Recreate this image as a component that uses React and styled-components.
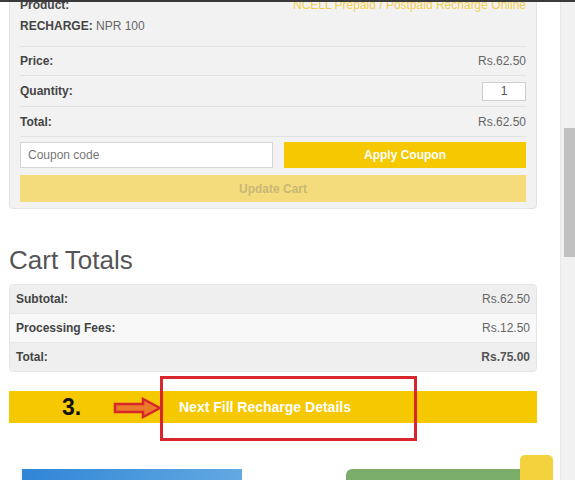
import React from 'react'
import styled, { createGlobalStyle } from 'styled-components'

const Global = createGlobalStyle`
  html, body { margin: 0; padding: 0; background: #fff; overflow: hidden; }
  body { font-family: "Liberation Sans", Arial, sans-serif; }
`

const Frame = styled.div`
  width: 575px;
  height: 480px;
  display: flex;
  overflow: hidden;
  position: relative;
  border-top: 2px solid #3a3a3a;
  box-sizing: border-box;
`

const Content = styled.div`
  width: 560px;
  height: 100%;
  padding: 0 23px 0 9px;
  box-sizing: border-box;
  overflow: hidden;
`

const Scrollbar = styled.div`
  width: 15px;
  height: 100%;
  background: #f1f1f1;
  border-left: 1px solid #e8e8e8;
  box-sizing: border-box;
  display: flex;
  flex-direction: column;
  align-items: flex-end;
`

const Thumb = styled.div`
  width: 11px;
  height: 129px;
  margin-top: 126px;
  background: #c1c1c1;
`

const Card = styled.div`
  margin-top: -15px;
  background: #f2f2f2;
  border: 1px solid #e3e3e3;
  border-radius: 4px;
  padding: 0 10px 6px;
`

const Row = styled.div`
  display: flex;
  justify-content: space-between;
  align-items: center;
  height: ${p => p.$h || 29}px;
  border-bottom: 1px solid #e2e2e2;
  font-size: 12px;
  color: #666;
`

const ProductRow = styled.div`
  padding: 7px 0 9px;
  border-bottom: 1px solid #e2e2e2;
  font-size: 12px;
  line-height: 21px;
  color: #666;
`

const Line = styled.div`
  display: flex;
  justify-content: space-between;
`

const Label = styled.span`
  font-weight: bold;
  color: #444;
`

const ProductLink = styled.span`
  color: #f3cf4e;
`

const QtyInput = styled.div`
  width: 44px;
  height: 19px;
  border: 1px solid #cfcfcf;
  background: #fff;
  box-sizing: border-box;
  display: flex;
  align-items: center;
  justify-content: center;
  font-size: 12px;
  color: #555;
`

const CouponRow = styled.div`
  display: flex;
  gap: 11px;
  margin-top: 5px;
`

const CouponInput = styled.div`
  flex: 0 0 253px;
  height: 26px;
  border: 1px solid #d6d6d6;
  background: #fff;
  box-sizing: border-box;
  padding-left: 7px;
  display: flex;
  align-items: center;
  font-size: 12px;
  color: #777;
`

const Button = styled.div`
  flex: 1;
  height: ${p => p.$h || 26}px;
  background: ${p => (p.$pale ? '#f4dc7c' : '#f5c800')};
  color: ${p => (p.$pale ? '#c9b874' : '#fff')};
  font-size: 12px;
  font-weight: bold;
  display: flex;
  align-items: center;
  justify-content: center;
  margin-top: ${p => p.$mt || 0}px;
`

const Heading = styled.h2`
  margin: 35px 0 0;
  font-size: 26px;
  font-weight: normal;
  color: #555;
  line-height: 32px;
`

const Totals = styled.div`
  margin-top: 8px;
  border: 1px solid #e6e6e6;
  border-radius: 4px;
  overflow: hidden;
`

const TotalRow = styled.div`
  display: flex;
  justify-content: space-between;
  align-items: center;
  height: 28px;
  padding: 0 6px;
  font-size: 12px;
  color: #666;
  background: ${p => (p.$alt ? '#f8f8f8' : '#efefef')};
  font-weight: ${p => (p.$bold ? 'bold' : 'normal')};
  & + & { border-top: 1px solid #e9e9e9; }
`

const Amount = styled.span`
  color: ${p => (p.$strong ? '#555' : '#666')};
`

const NextWrap = styled.div`
  position: relative;
  margin-top: 19px;
`

const NextBar = styled.div`
  height: 32px;
  background: #f5c800;
  display: flex;
  align-items: center;
`

const Step = styled.span`
  width: 105px;
  padding-left: 53px;
  box-sizing: border-box;
  font-size: 23px;
  font-weight: bold;
  color: #111;
`

const NextText = styled.span`
  margin-left: 65px;
  font-size: 14px;
  font-weight: bold;
  color: #fff;
`

const Highlight = styled.div`
  position: absolute;
  left: 151px;
  top: -15px;
  width: 257px;
  height: 65px;
  border: 3px solid #d7262c;
  box-sizing: border-box;
`

const Arrow = styled.svg`
  position: absolute;
  left: 104px;
  top: 6px;
`

const Promos = styled.div`
  display: flex;
  justify-content: space-between;
  margin-top: 46px;
  padding: 0 0 0 11px;
  margin-right: -16px;
`

const BluePromo = styled.div`
  width: 220px;
  height: 40px;
  background: linear-gradient(90deg, #2f86d6, #63a9e2);
  border-left: 2px solid #f4f4f4;
`

const GreenPromo = styled.div`
  width: 207px;
  height: 40px;
  border-radius: 6px 6px 0 0;
  background: #7aad6a;
`

const TopButton = styled.div`
  position: absolute;
  left: 520px;
  top: 453px;
  width: 33px;
  height: 30px;
  border-radius: 5px;
  background: #f4d23e;
`

export default function App() {
  return (
    <>
      <Global />
      <Frame>
        <Content>
          <Card>
            <ProductRow>
              <Line>
                <Label>Product:</Label>
                <ProductLink>NCELL Prepaid / Postpaid Recharge Online</ProductLink>
              </Line>
              <Line>
                <span><Label>RECHARGE:</Label> NPR 100</span>
              </Line>
            </ProductRow>
            <Row $h={28}>
              <Label>Price:</Label>
              <span>Rs.62.50</span>
            </Row>
            <Row $h={30}>
              <Label>Quantity:</Label>
              <QtyInput>1</QtyInput>
            </Row>
            <Row $h={29}>
              <Label>Total:</Label>
              <span>Rs.62.50</span>
            </Row>
            <CouponRow>
              <CouponInput>Coupon code</CouponInput>
              <Button>Apply Coupon</Button>
            </CouponRow>
            <Button $pale $h={27} $mt={7}>Update Cart</Button>
          </Card>

          <Heading>Cart Totals</Heading>
          <Totals>
            <TotalRow>
              <Label>Subtotal:</Label>
              <Amount>Rs.62.50</Amount>
            </TotalRow>
            <TotalRow $alt>
              <Label>Processing Fees:</Label>
              <Amount>Rs.12.50</Amount>
            </TotalRow>
            <TotalRow $bold>
              <Label>Total:</Label>
              <Amount $strong>Rs.75.00</Amount>
            </TotalRow>
          </Totals>

          <NextWrap>
            <NextBar>
              <Step>3.</Step>
              <NextText>Next Fill Recharge Details</NextText>
            </NextBar>
            <Arrow width="50" height="22" viewBox="0 0 50 22">
              <polygon
                points="2,7 30,7 30,2 47,11 30,20 30,15 2,15"
                fill="#ec7a2a"
                stroke="#d7262c"
                strokeWidth="2.5"
              />
            </Arrow>
            <Highlight />
          </NextWrap>

          <Promos>
            <BluePromo />
            <GreenPromo />
          </Promos>
        </Content>
        <Scrollbar>
          <Thumb />
        </Scrollbar>
        <TopButton />
      </Frame>
    </>
  )
}
